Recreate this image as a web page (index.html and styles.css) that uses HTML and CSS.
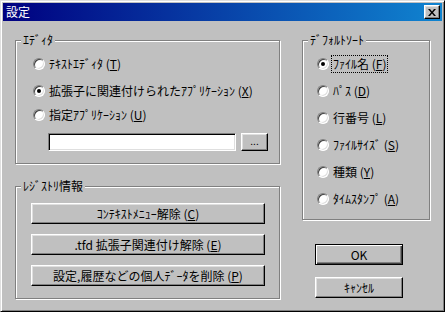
FILE: index.html
```html
<!DOCTYPE html>
<html lang="ja">
<head>
<meta charset="utf-8">
<link rel="stylesheet" href="styles.css">
</head>
<body>
<div class="window">
  <div class="titlebar">
    <span class="title">設定</span>
    <span class="close"><svg width="8" height="7" viewBox="0 0 8 7"><path d="M0 0h2l2 2.5L6 0h2L5 3.5 8 7H6L4 4.5 2 7H0l3-3.5z" fill="#000"/></svg></span>
  </div>
  <div class="content">
    <div class="leftcol">
      <div class="group editor">
        <span class="legend">ｴﾃﾞｨﾀ</span>
        <div class="row r1"><span class="radio"></span><span class="lbl">ﾃｷｽﾄｴﾃﾞｨﾀ (<u>T</u>)</span></div>
        <div class="row r2"><span class="radio on"></span><span class="lbl">拡張子に関連付けられたｱﾌﾟﾘｹｰｼｮﾝ (<u>X</u>)</span></div>
        <div class="row r3"><span class="radio"></span><span class="lbl">指定ｱﾌﾟﾘｹｰｼｮﾝ (<u>U</u>)</span></div>
        <div class="editrow"><span class="edit"></span><span class="btn dots">...</span></div>
      </div>
      <div class="group registry">
        <span class="legend">ﾚｼﾞｽﾄﾘ情報</span>
        <span class="btn wide">ｺﾝﾃｷｽﾄﾒﾆｭｰ解除 (<u>C</u>)</span>
        <span class="btn wide">.tfd 拡張子関連付け解除 (<u>E</u>)</span>
        <span class="btn wide">設定,履歴などの個人ﾃﾞｰﾀを削除 (<u>P</u>)</span>
      </div>
    </div>
    <div class="rightcol">
      <div class="group sort">
        <span class="legend">ﾃﾞﾌｫﾙﾄｿｰﾄ</span>
        <div class="srow"><span class="radio on"></span><span class="lbl focus">ﾌｧｲﾙ名 (<u>F</u>)</span></div>
        <div class="srow"><span class="radio"></span><span class="lbl">ﾊﾟｽ (<u>D</u>)</span></div>
        <div class="srow"><span class="radio"></span><span class="lbl">行番号 (<u>L</u>)</span></div>
        <div class="srow"><span class="radio"></span><span class="lbl">ﾌｧｲﾙｻｲｽﾞ (<u>S</u>)</span></div>
        <div class="srow"><span class="radio"></span><span class="lbl">種類 (<u>Y</u>)</span></div>
        <div class="srow"><span class="radio"></span><span class="lbl">ﾀｲﾑｽﾀﾝﾌﾟ (<u>A</u>)</span></div>
      </div>
      <span class="btn action default">OK</span>
      <span class="btn action cancel">ｷｬﾝｾﾙ</span>
    </div>
  </div>
</div>
</body>
</html>
```
FILE: styles.css
```css
html, body {
  margin: 0;
  padding: 0;
  background: #c0c0c0;
}
body {
  font-family: "Noto Sans CJK JP", sans-serif;
  font-size: 12px;
  line-height: 16px;
  color: #000;
}
u { text-decoration: underline; text-underline-offset: 1px; }

.window {
  width: 445px;
  height: 312px;
  box-sizing: border-box;
  background: #c0c0c0;
  border: 1px solid;
  border-color: #dfdfdf #000 #000 #dfdfdf;
  box-shadow: inset 1px 1px 0 #fff, inset -1px -1px 0 #808080;
  padding: 2px;
  display: flex;
  flex-direction: column;
}

.titlebar {
  height: 18px;
  background: linear-gradient(to right, #000080, #1084d0);
  display: flex;
  align-items: center;
  justify-content: space-between;
  padding: 0 2px 0 2px;
  flex: none;
}
.title {
  color: #fff;
  font-size: 12px;
  line-height: 14px;
  padding-left: 1px;
}
.close {
  width: 16px;
  height: 14px;
  box-sizing: border-box;
  background: #c0c0c0;
  border: 1px solid;
  border-color: #fff #000 #000 #fff;
  box-shadow: inset -1px -1px 0 #808080, inset 1px 1px 0 #dfdfdf;
  display: flex;
  align-items: center;
  justify-content: center;
}
.close svg { display: block; margin-left: -1px; }

.content {
  display: flex;
  padding: 19px 0 0 12px;
  gap: 22px;
}

.leftcol {
  display: flex;
  flex-direction: column;
  width: 265px;
}
.rightcol {
  display: flex;
  flex-direction: column;
  width: 128px;
}

.group {
  position: relative;
  box-sizing: border-box;
  border: 1px solid #808080;
  box-shadow: 1px 1px 0 #fff, inset 1px 1px 0 #fff;
}
.legend {
  position: absolute;
  top: -9px;
  left: 5px;
  padding: 0 2px;
  background: #c0c0c0;
  line-height: 16px;
}

.editor {
  height: 124px;
  padding: 15px 0 0 17px;
}
.registry {
  height: 113px;
  margin-top: 22px;
  padding: 16px 0 0 15px;
  display: flex;
  flex-direction: column;
  gap: 10px;
}
.sort {
  height: 180px;
  padding: 15px 0 0 14px;
  display: flex;
  flex-direction: column;
  gap: 11px;
}

.row, .srow {
  display: flex;
  align-items: center;
  height: 16px;
  gap: 4px;
}
.r2 { margin-top: 11px; }
.r3 { margin-top: 8px; }

.lbl { white-space: nowrap; }
.focus {
  outline: 1px dotted #000;
  outline-offset: 0;
  padding: 0 1px;
  margin-left: -1px;
}

.radio {
  width: 12px;
  height: 12px;
  box-sizing: border-box;
  border-radius: 50%;
  border: 1px solid;
  border-color: #808080 #fff #fff #808080;
  background: #fff;
  box-shadow: inset 1px 1px 0 #404040, inset -1px -1px 0 #dfdfdf;
  position: relative;
  flex: none;
}
.radio.on::after {
  content: "";
  position: absolute;
  left: 3px;
  top: 3px;
  width: 4px;
  height: 4px;
  border-radius: 50%;
  background: #000;
}

.editrow {
  display: flex;
  gap: 5px;
  margin: 10px 0 0 15px;
}
.edit {
  width: 188px;
  height: 18px;
  box-sizing: border-box;
  background: #fff;
  border: 1px solid;
  border-color: #808080 #fff #fff #808080;
  box-shadow: inset 1px 1px 0 #000, inset -1px -1px 0 #dfdfdf;
}

.btn {
  box-sizing: border-box;
  background: #c0c0c0;
  border: 1px solid;
  border-color: #fff #000 #000 #fff;
  box-shadow: inset -1px -1px 0 #808080, inset 1px 1px 0 #dfdfdf;
  display: flex;
  align-items: center;
  justify-content: center;
  white-space: nowrap;
}
.dots {
  width: 27px;
  height: 18px;
  font-size: 10px;
  line-height: 10px;
  padding-bottom: 2px;
}
.wide {
  width: 234px;
  height: 21px;
}
.action {
  width: 88px;
  height: 21px;
  margin-left: 13px;
}
.default {
  margin-top: 24px;
  border: 1px solid #000;
  box-shadow: inset 1px 1px 0 #fff, inset -1px -1px 0 #404040, inset -2px -2px 0 #808080;
}
.cancel {
  margin-top: 12px;
}
```
